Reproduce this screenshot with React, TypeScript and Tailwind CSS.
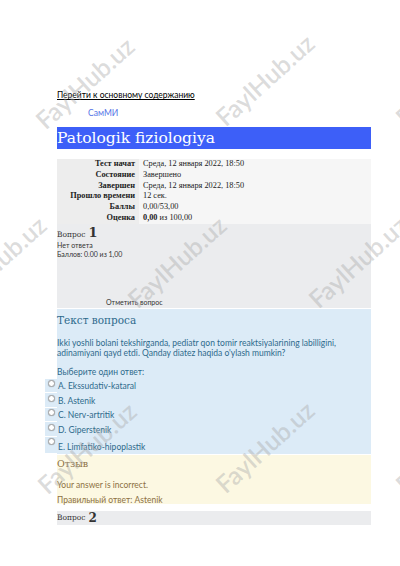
const sans = "font-['Lato','Open_Sans',sans-serif]";
const serif = "font-['DejaVu_Serif','Liberation_Serif',serif]";
const times = "font-['Liberation_Serif','Times_New_Roman',serif]";

const summary = [
  { label: "Тест начат", value: "Среда, 12 января 2022, 18:50" },
  { label: "Состояние", value: "Завершено" },
  { label: "Завершен", value: "Среда, 12 января 2022, 18:50" },
  { label: "Прошло времени", value: "12 сек." },
  { label: "Баллы", value: "0,00/53,00" },
];

const answers = [
  "A. Ekssudativ-kataral",
  "B. Astenik",
  "C. Nerv-artritik",
  "D. Giperstenik",
  "E. Limfatiko-hipoplastik",
];

function Watermark({ className }: { className: string }) {
  return (
    <div
      className={`pointer-events-none absolute -translate-x-1/2 -translate-y-1/2 -rotate-[42deg] whitespace-nowrap text-[25px] font-semibold text-[rgba(170,170,170,0.42)] ${sans} ${className}`}
    >
      FaylHub.uz
    </div>
  );
}

export default function App() {
  return (
    <div className="relative h-[566px] w-[400px] overflow-hidden bg-white">
      <div className="pl-[57px] pr-[29px] pt-[89px]">
        <a href="#" className={`block text-[8.5px] leading-[12px] text-black underline ${sans}`}>
          Перейти к основному содержанию
        </a>
        <div className={`mt-[6px] pl-[31px] text-[8.5px] leading-[12px] text-[#5473e6] ${sans}`}>
          СамМИ
        </div>

        <h1 className={`mt-[8px] h-[22px] bg-[#3d5ff8] text-[15.5px] leading-[22px] text-white ${serif}`}>
          Patologik fiziologiya
        </h1>

        <table className={`mt-[10px] w-full border-collapse bg-[#f6f6f6] text-[8.3px] leading-[10.8px] text-[#222] ${times}`}>
          <tbody>
            {summary.map((row) => (
              <tr key={row.label}>
                <th className="w-[82px] bg-[#ededed] pr-[4px] text-right font-bold">
                  {row.label}
                </th>
                <td className="pl-[4px]">{row.value}</td>
              </tr>
            ))}
            <tr>
              <th className="w-[82px] bg-[#ededed] pr-[4px] text-right font-bold">Оценка</th>
              <td className="pl-[4px]">
                <b>0,00</b> из 100,00
              </td>
            </tr>
          </tbody>
        </table>

        <div className="flex h-[84px] flex-col bg-[#ebecee]">
          <div className={`flex items-baseline gap-[3px] pt-[1px] text-[#333] ${serif}`}>
            <span className="text-[7.5px]">Вопрос</span>
            <span className="text-[13px] font-bold leading-[16px]">1</span>
          </div>
          <div className={`text-[7px] leading-[9px] text-[#333] ${sans}`}>Нет ответа</div>
          <div className={`text-[7px] leading-[9px] text-[#333] ${sans}`}>Баллов: 0.00 из 1,00</div>
          <div className={`mt-auto pb-[1px] pl-[49px] text-[7px] leading-[10px] text-[#333] ${sans}`}>
            Отметить вопрос
          </div>
        </div>

        <div className="mt-px bg-[#dcebf7] pb-[1px] pt-[4px] text-[#2e6a8c]">
          <div className={`text-[10.5px] leading-[14px] ${serif}`}>Текст вопроса</div>
          <p className={`mt-[11px] text-[8.5px] leading-[10.5px] ${sans}`}>
            Ikki yoshli bolani tekshirganda, pediatr qon tomir reaktsiyalarining labilligini,
            adinamiyani qayd etdi. Qanday diatez haqida o'ylash mumkin?
          </p>
          <div className={`mt-[8px] text-[8.5px] leading-[11px] ${sans}`}>Выберите один ответ:</div>
          <div className="flex flex-col">
            {answers.map((a, i) => (
              <div
                key={a}
                className={`-ml-[12px] mt-px flex items-start bg-[#dcebf7] ${i === 4 ? "h-[16px]" : "h-[13.5px]"}`}
              >
                <span className="mt-[-1px] flex h-[12px] w-[12px] items-center justify-center">
                  <span className="h-[7px] w-[7px] rounded-full border border-[#a3a3a3] bg-white shadow-[0_0_1px_rgba(0,0,0,0.3)]" />
                </span>
                <span className={`ml-px self-end text-[8.5px] leading-[11px] ${sans}`}>{a}</span>
              </div>
            ))}
          </div>
        </div>

        <div className="mt-px h-[49px] bg-[#fcf8e2] pt-[2px] text-[#8c7042]">
          <div className={`text-[9.5px] leading-[13px] ${serif}`}>Отзыв</div>
          <div className={`mt-[10px] text-[8.5px] leading-[11px] ${sans}`}>Your answer is incorrect.</div>
          <div className={`mt-[4px] text-[8.5px] leading-[11px] ${sans}`}>Правильный ответ: Astenik</div>
        </div>

        <div className={`mt-[7px] flex h-[14px] items-center gap-[3px] bg-[#ebecee] text-[#333] ${serif}`}>
          <span className="text-[7.5px]">Вопрос</span>
          <span className="text-[12px] font-bold leading-[14px]">2</span>
        </div>
      </div>

      <Watermark className="left-[85px] top-[83px]" />
      <Watermark className="left-[265px] top-[80px]" />
      <Watermark className="left-[445px] top-[80px]" />
      <Watermark className="left-[-3px] top-[262px]" />
      <Watermark className="left-[177px] top-[262px]" />
      <Watermark className="left-[358px] top-[262px]" />
      <Watermark className="left-[87px] top-[448px]" />
      <Watermark className="left-[265px] top-[447px]" />
      <Watermark className="left-[445px] top-[447px]" />
    </div>
  );
}
